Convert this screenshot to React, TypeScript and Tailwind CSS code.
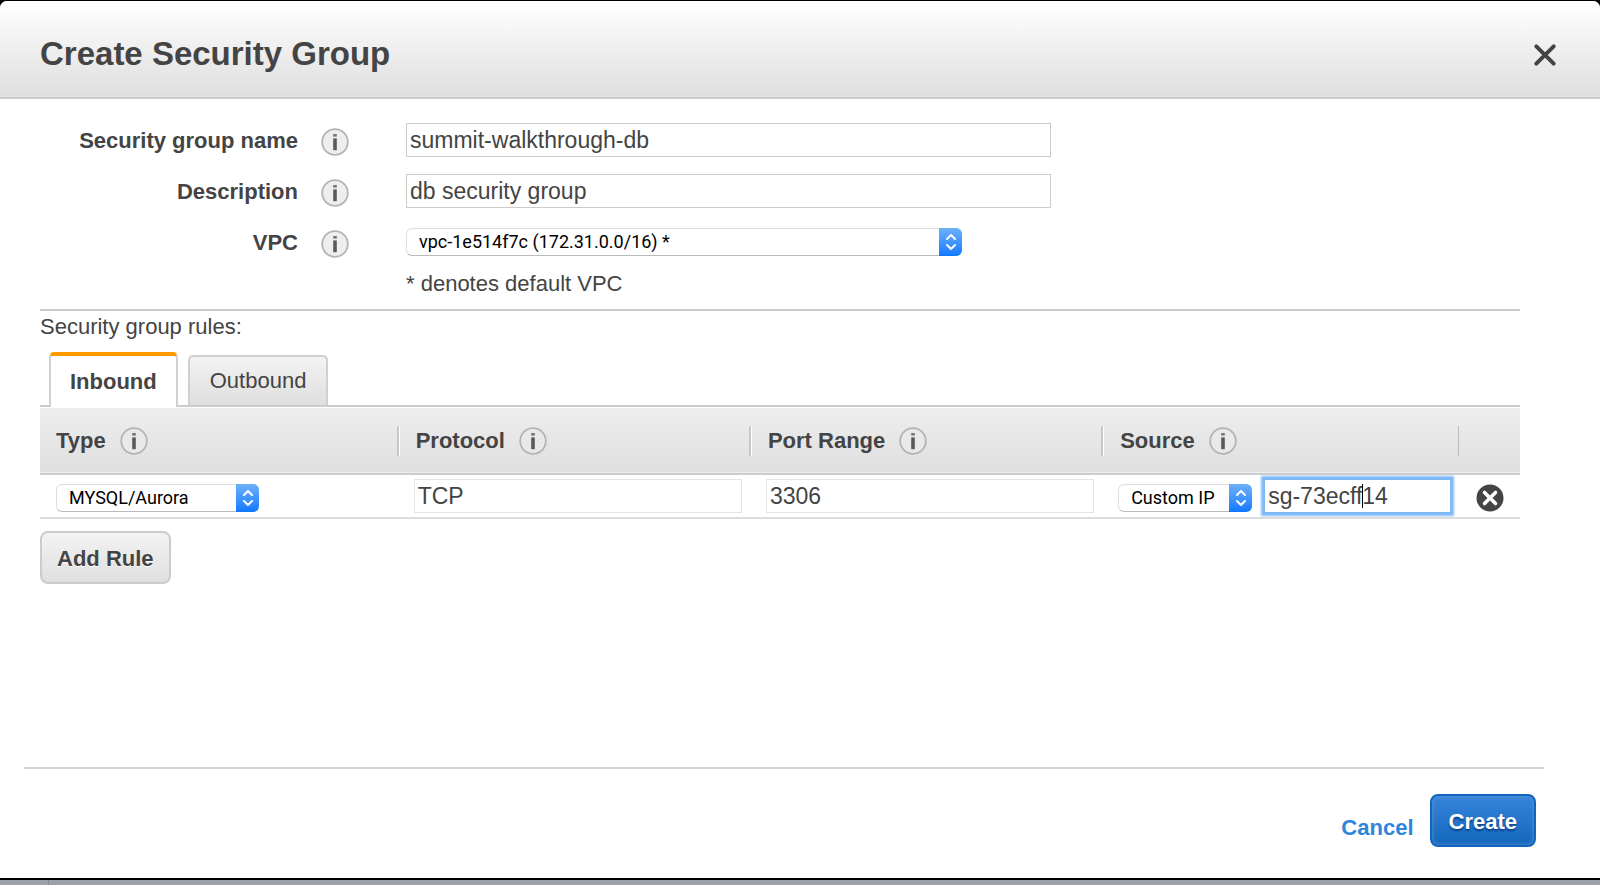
import { useState } from "react";
import type { ReactNode } from "react";

const inputBase =
  "block h-[34px] border bg-white px-[3px] font-['Liberation_Sans',Arial,sans-serif] text-[23px] leading-[30px] text-[#444] outline-none";

function InfoIcon({ filled = false }: { filled?: boolean }) {
  return (
    <svg viewBox="0 0 28 28" className="block size-7" aria-hidden="true">
      <circle cx="14" cy="14" r="12.8" fill={filled ? "#eee" : "#e9e9e9"} stroke="#b4b4b4" strokeWidth="1.8" />
      <rect x="12.2" y="6" width="3.6" height="2.6" fill="#777" />
      <rect x="12.2" y="10.4" width="3.6" height="11.8" fill="#5a5a5a" />
    </svg>
  );
}

function InfoButton({ label, filled }: { label: string; filled?: boolean }) {
  return (
    <button type="button" aria-label={label} className="block size-7 shrink-0">
      <InfoIcon filled={filled} />
    </button>
  );
}

function Select({ id, label, options, className }: { id: string; label?: string; options: string[]; className: string }) {
  return (
    <div className={`relative ${className}`}>
      <select
        id={id}
        aria-label={label}
        className="block h-7 w-full appearance-none rounded-[6px] border border-[#ddd] border-b-[#bbb] bg-white pr-7 pl-3 font-[Roboto,Inter,sans-serif] text-[18px] leading-6 text-black outline-none"
      >
        {options.map((o) => (
          <option key={o}>{o}</option>
        ))}
      </select>
      <span className="pointer-events-none absolute inset-y-0 right-0 flex w-[23px] items-center justify-center rounded-r-[6px] bg-linear-to-b from-[#6bb1fa] to-[#0a78ff]">
        <svg viewBox="0 0 12 18" className="h-[18px] w-3" fill="none" stroke="#fff" strokeWidth="2" strokeLinecap="round" strokeLinejoin="round" aria-hidden="true">
          <path d="M2 6L6 2L10 6M2 12L6 16L10 12" />
        </svg>
      </span>
    </div>
  );
}

function FormRow({ id, label, children }: { id: string; label: string; children: ReactNode }) {
  return (
    <div className="flex h-[34px] items-center">
      <label htmlFor={id} className="w-[258px] shrink-0 pt-[2px] text-right font-bold">
        {label}
      </label>
      <div className="mt-1 mr-[57px] ml-[23px]">
        <InfoButton label={`About ${label}`} filled />
      </div>
      {children}
    </div>
  );
}

function HeaderCell({ children, divider = true }: { children: string; divider?: boolean }) {
  return (
    <th scope="col" className="h-[66px] p-0 text-left">
      <div className="flex h-8 items-center">
        {divider && <span className="h-[30px] w-[3px] shrink-0 border-l-2 border-[#c8c8c8] bg-white" />}
        <span className="ml-4">{children}</span>
        <span className="ml-[14px]">
          <InfoButton label={`About ${children}`} />
        </span>
      </div>
    </th>
  );
}

export default function App() {
  const [name, setName] = useState("summit-walkthrough-db");
  const [description, setDescription] = useState("db security group");
  const [source, setSource] = useState("sg-73ecff14");
  const [tab, setTab] = useState("inbound");

  return (
    <div className="flex min-h-screen flex-col bg-black pt-px font-['Liberation_Sans',Arial,sans-serif] text-[22px] leading-7 text-[#444]">
      <main role="dialog" aria-labelledby="title" className="flex flex-1 flex-col rounded-t-[7px] bg-white">
        <header className="flex h-[98px] items-center justify-between rounded-t-[7px] border-b-2 border-[#ccc] bg-linear-to-b from-white to-[#dfdfdf] pr-[43px] pl-10">
          <h1 id="title" className="mt-[10px] text-[33px] leading-10 font-bold">
            Create Security Group
          </h1>
          <button type="button" aria-label="Close" className="mt-3">
            <svg viewBox="0 0 24 24" className="block size-6" stroke="#444" strokeWidth="4" strokeLinecap="round" aria-hidden="true">
              <path d="M3.3 3.3L20.7 20.7M20.7 3.3L3.3 20.7" />
            </svg>
          </button>
        </header>

        <form className="flex flex-1 flex-col" onSubmit={(e) => e.preventDefault()}>
          <div className="pr-20 pl-10">
            <div className="flex flex-col gap-[17px] pt-6">
              <FormRow id="name" label="Security group name">
                <input id="name" value={name} onChange={(e) => setName(e.target.value)} className={`${inputBase} w-[645px] border-[#ccc]`} />
              </FormRow>
              <FormRow id="description" label="Description">
                <input id="description" value={description} onChange={(e) => setDescription(e.target.value)} className={`${inputBase} w-[645px] border-[#ccc]`} />
              </FormRow>
              <FormRow id="vpc" label="VPC">
                <Select id="vpc" options={["vpc-1e514f7c (172.31.0.0/16) *"]} className="w-[556px]" />
              </FormRow>
            </div>
            <p className="mt-[11px] ml-[366px] pb-[11px]">* denotes default VPC</p>
            <hr className="border-t-2 border-[#ccc]" />
            <p className="pt-[2px] pb-[11px]">Security group rules:</p>

            <div role="tablist" className="flex items-end border-b-2 border-[#ccc] pl-[9px]">
              <button
                type="button"
                role="tab"
                aria-selected={tab === "inbound"}
                onClick={() => setTab("inbound")}
                className="-mb-[2px] h-[55px] rounded-t-[5px] border-x-2 border-t-4 border-x-[#d0d0d0] border-t-[#f90] bg-white px-[19px] font-bold"
              >
                Inbound
              </button>
              <button
                type="button"
                role="tab"
                aria-selected={tab === "outbound"}
                onClick={() => setTab("outbound")}
                className="ml-[10px] h-[50px] rounded-t-[5px] border-x-2 border-t-2 border-[#d0d0d0] bg-linear-to-b from-[#f3f3f3] to-[#dfdfdf] px-5"
              >
                Outbound
              </button>
            </div>

            <table className="mt-px w-full table-fixed border-collapse">
              <colgroup>
                <col className="w-[24.1%]" />
                <col className="w-[23.8%]" />
                <col className="w-[23.8%]" />
                <col className="w-[24.1%]" />
                <col />
              </colgroup>
              <thead>
                <tr className="border-b-2 border-[#ccc] bg-linear-to-b from-[#eee] to-[#dfdfdf]">
                  <HeaderCell divider={false}>Type</HeaderCell>
                  <HeaderCell>Protocol</HeaderCell>
                  <HeaderCell>Port Range</HeaderCell>
                  <HeaderCell>Source</HeaderCell>
                  <td className="p-0">
                    <div className="h-[30px] border-l border-[#bbb]" />
                  </td>
                </tr>
              </thead>
              <tbody>
                <tr className="h-11 border-b-2 border-[#ddd]">
                  <td className="p-0 pl-4">
                    <Select id="type" label="Type" options={["MYSQL/Aurora"]} className="mt-[3px] w-[203px]" />
                  </td>
                  <td className="p-0 pr-[7px] pl-[17px]">
                    <input aria-label="Protocol" readOnly value="TCP" className={`${inputBase} w-full border-[#e5e5e5]`} />
                  </td>
                  <td className="p-0 pr-[7px] pl-[17px]">
                    <input aria-label="Port Range" readOnly value="3306" className={`${inputBase} w-full border-[#e5e5e5]`} />
                  </td>
                  <td className="p-0 pr-[7px] pl-[17px]">
                    <div className="flex items-center gap-3">
                      <Select id="source-kind" label="Source kind" options={["Custom IP"]} className="mt-[3px] w-[134px]" />
                      <div className="relative min-w-0 flex-1">
                        <input
                          aria-label="Source"
                          value={source}
                          onChange={(e) => setSource(e.target.value)}
                          className={`${inputBase} w-full border-[#7db8f5] shadow-[0_0_2px_3px_#7fbaf8]`}
                        />
                        <span className="absolute top-[5px] left-[98px] h-6 w-px bg-black" />
                      </div>
                    </div>
                  </td>
                  <td className="p-0 pl-[18px]">
                    <button type="button" aria-label="Remove rule" className="mt-[3px] block">
                      <svg viewBox="0 0 28 28" className="block size-7" aria-hidden="true">
                        <circle cx="14" cy="14" r="13.5" fill="#444" />
                        <path d="M8.5 8.5L19.5 19.5M19.5 8.5L8.5 19.5" stroke="#fff" strokeWidth="3.6" strokeLinecap="round" />
                      </svg>
                    </button>
                  </td>
                </tr>
              </tbody>
            </table>

            <button
              type="button"
              className="mt-3 h-[53px] rounded-[8px] border-2 border-[#ccc] bg-linear-to-b from-[#f3f3f3] to-[#dfdfdf] px-[15px] pt-[2px] font-bold [text-shadow:0_1px_0_#fff]"
            >
              Add Rule
            </button>
          </div>

          <footer className="mx-6 mt-auto mr-14 flex h-[111px] items-start justify-end gap-4 border-t-2 border-[#d4d4d4] pt-[25px] pr-2 font-bold">
            <a href="#cancel" className="mt-5 text-[#2e85de]">
              Cancel
            </a>
            <button
              type="submit"
              className="h-[53px] rounded-[8px] border-2 border-[#1166bb] bg-linear-to-b from-[#3585dd] to-[#1166bb] px-[17px] pt-[2px] text-white shadow-[inset_0_0_4px_#5c98d0] [text-shadow:0_2px_2px_#0a3f80]"
            >
              Create
            </button>
          </footer>
        </form>
      </main>
      <div className="mt-[2px] h-[5px] bg-[#9aa1a8] pl-12">
        <div className="h-full w-px bg-[#858c92]" />
      </div>
    </div>
  );
}
